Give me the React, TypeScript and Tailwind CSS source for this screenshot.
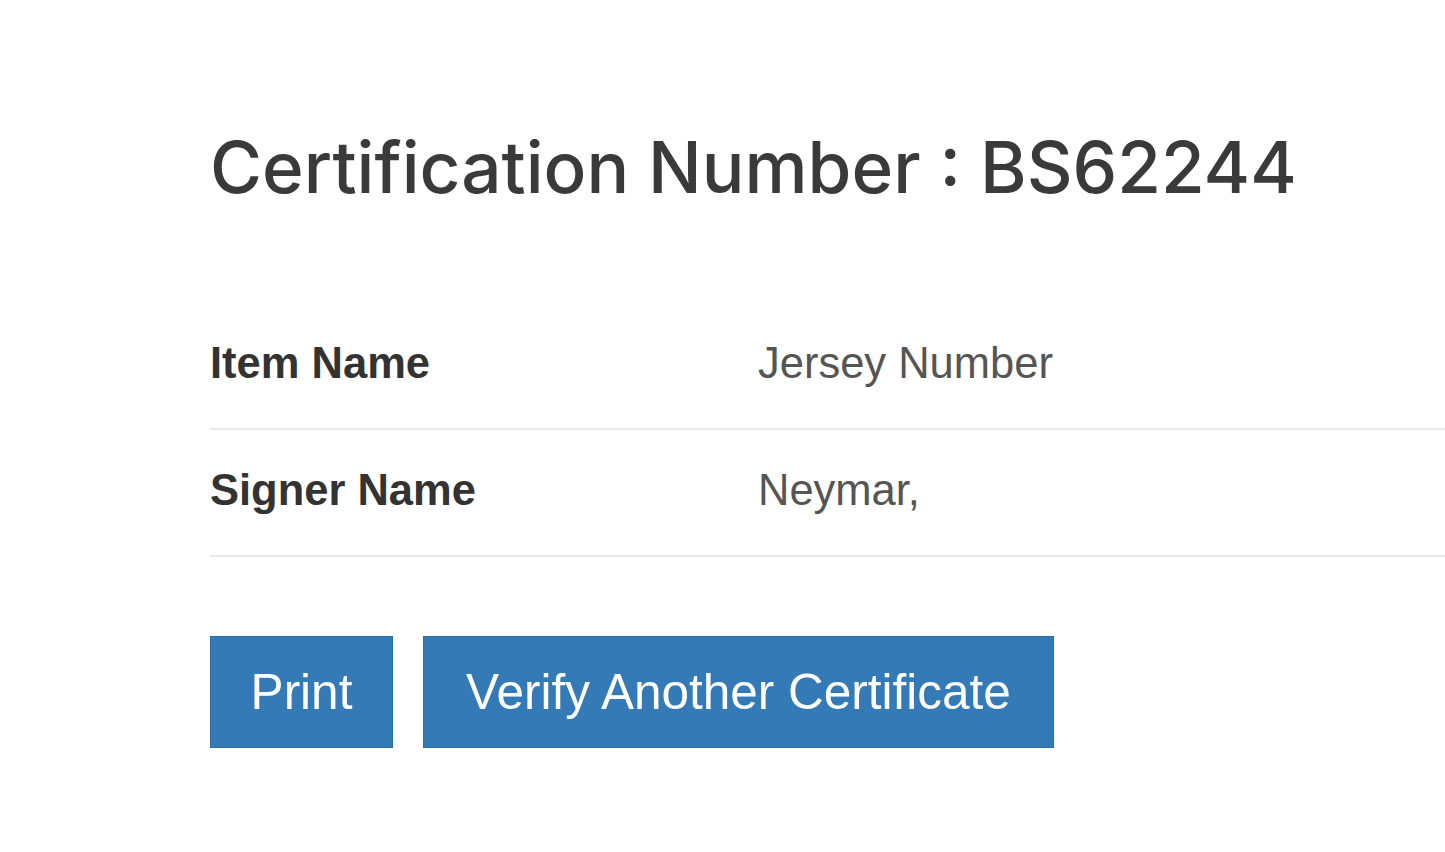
import React from 'react';

// 証明書の各行
const rows = [
  { label: 'Item Name', value: 'Jersey Number' },
  { label: 'Signer Name', value: 'Neymar,' },
];

export default function App() {
  return (
    <div className="min-h-[852px] w-full bg-white pl-[210px] pt-[129px] font-['Liberation_Sans',Arial,sans-serif] overflow-hidden">
      {/* 見出し */}
      <h1 className="font-['Inter',sans-serif] font-medium text-[71px] leading-[76px] text-[#3a3a3a] whitespace-nowrap">
        Certification Number : BS62244
      </h1>

      {/* テーブル */}
      <div className="mt-[98px] w-[1300px]">
        {rows.map((row) => (
          <div key={row.label} className="flex h-[127px] items-center border-b-2 border-[#e8e8e8]">
            <div className="w-[548px] pb-[4px] text-[43.5px] leading-none font-bold text-[#333]">{row.label}</div>
            <div className="pb-[4px] text-[43.5px] leading-none text-[#555]">{row.value}</div>
          </div>
        ))}
      </div>

      {/* ボタン */}
      <div className="mt-[79px] flex gap-[30px]">
        <button className="h-[112px] w-[183px] border border-[#2e6da4] bg-[#337ab7] text-[49.5px] leading-none text-white">
          Print
        </button>
        <button className="h-[112px] w-[631px] border border-[#2e6da4] bg-[#337ab7] text-[49.5px] leading-none text-white">
          Verify Another Certificate
        </button>
      </div>
    </div>
  );
}
